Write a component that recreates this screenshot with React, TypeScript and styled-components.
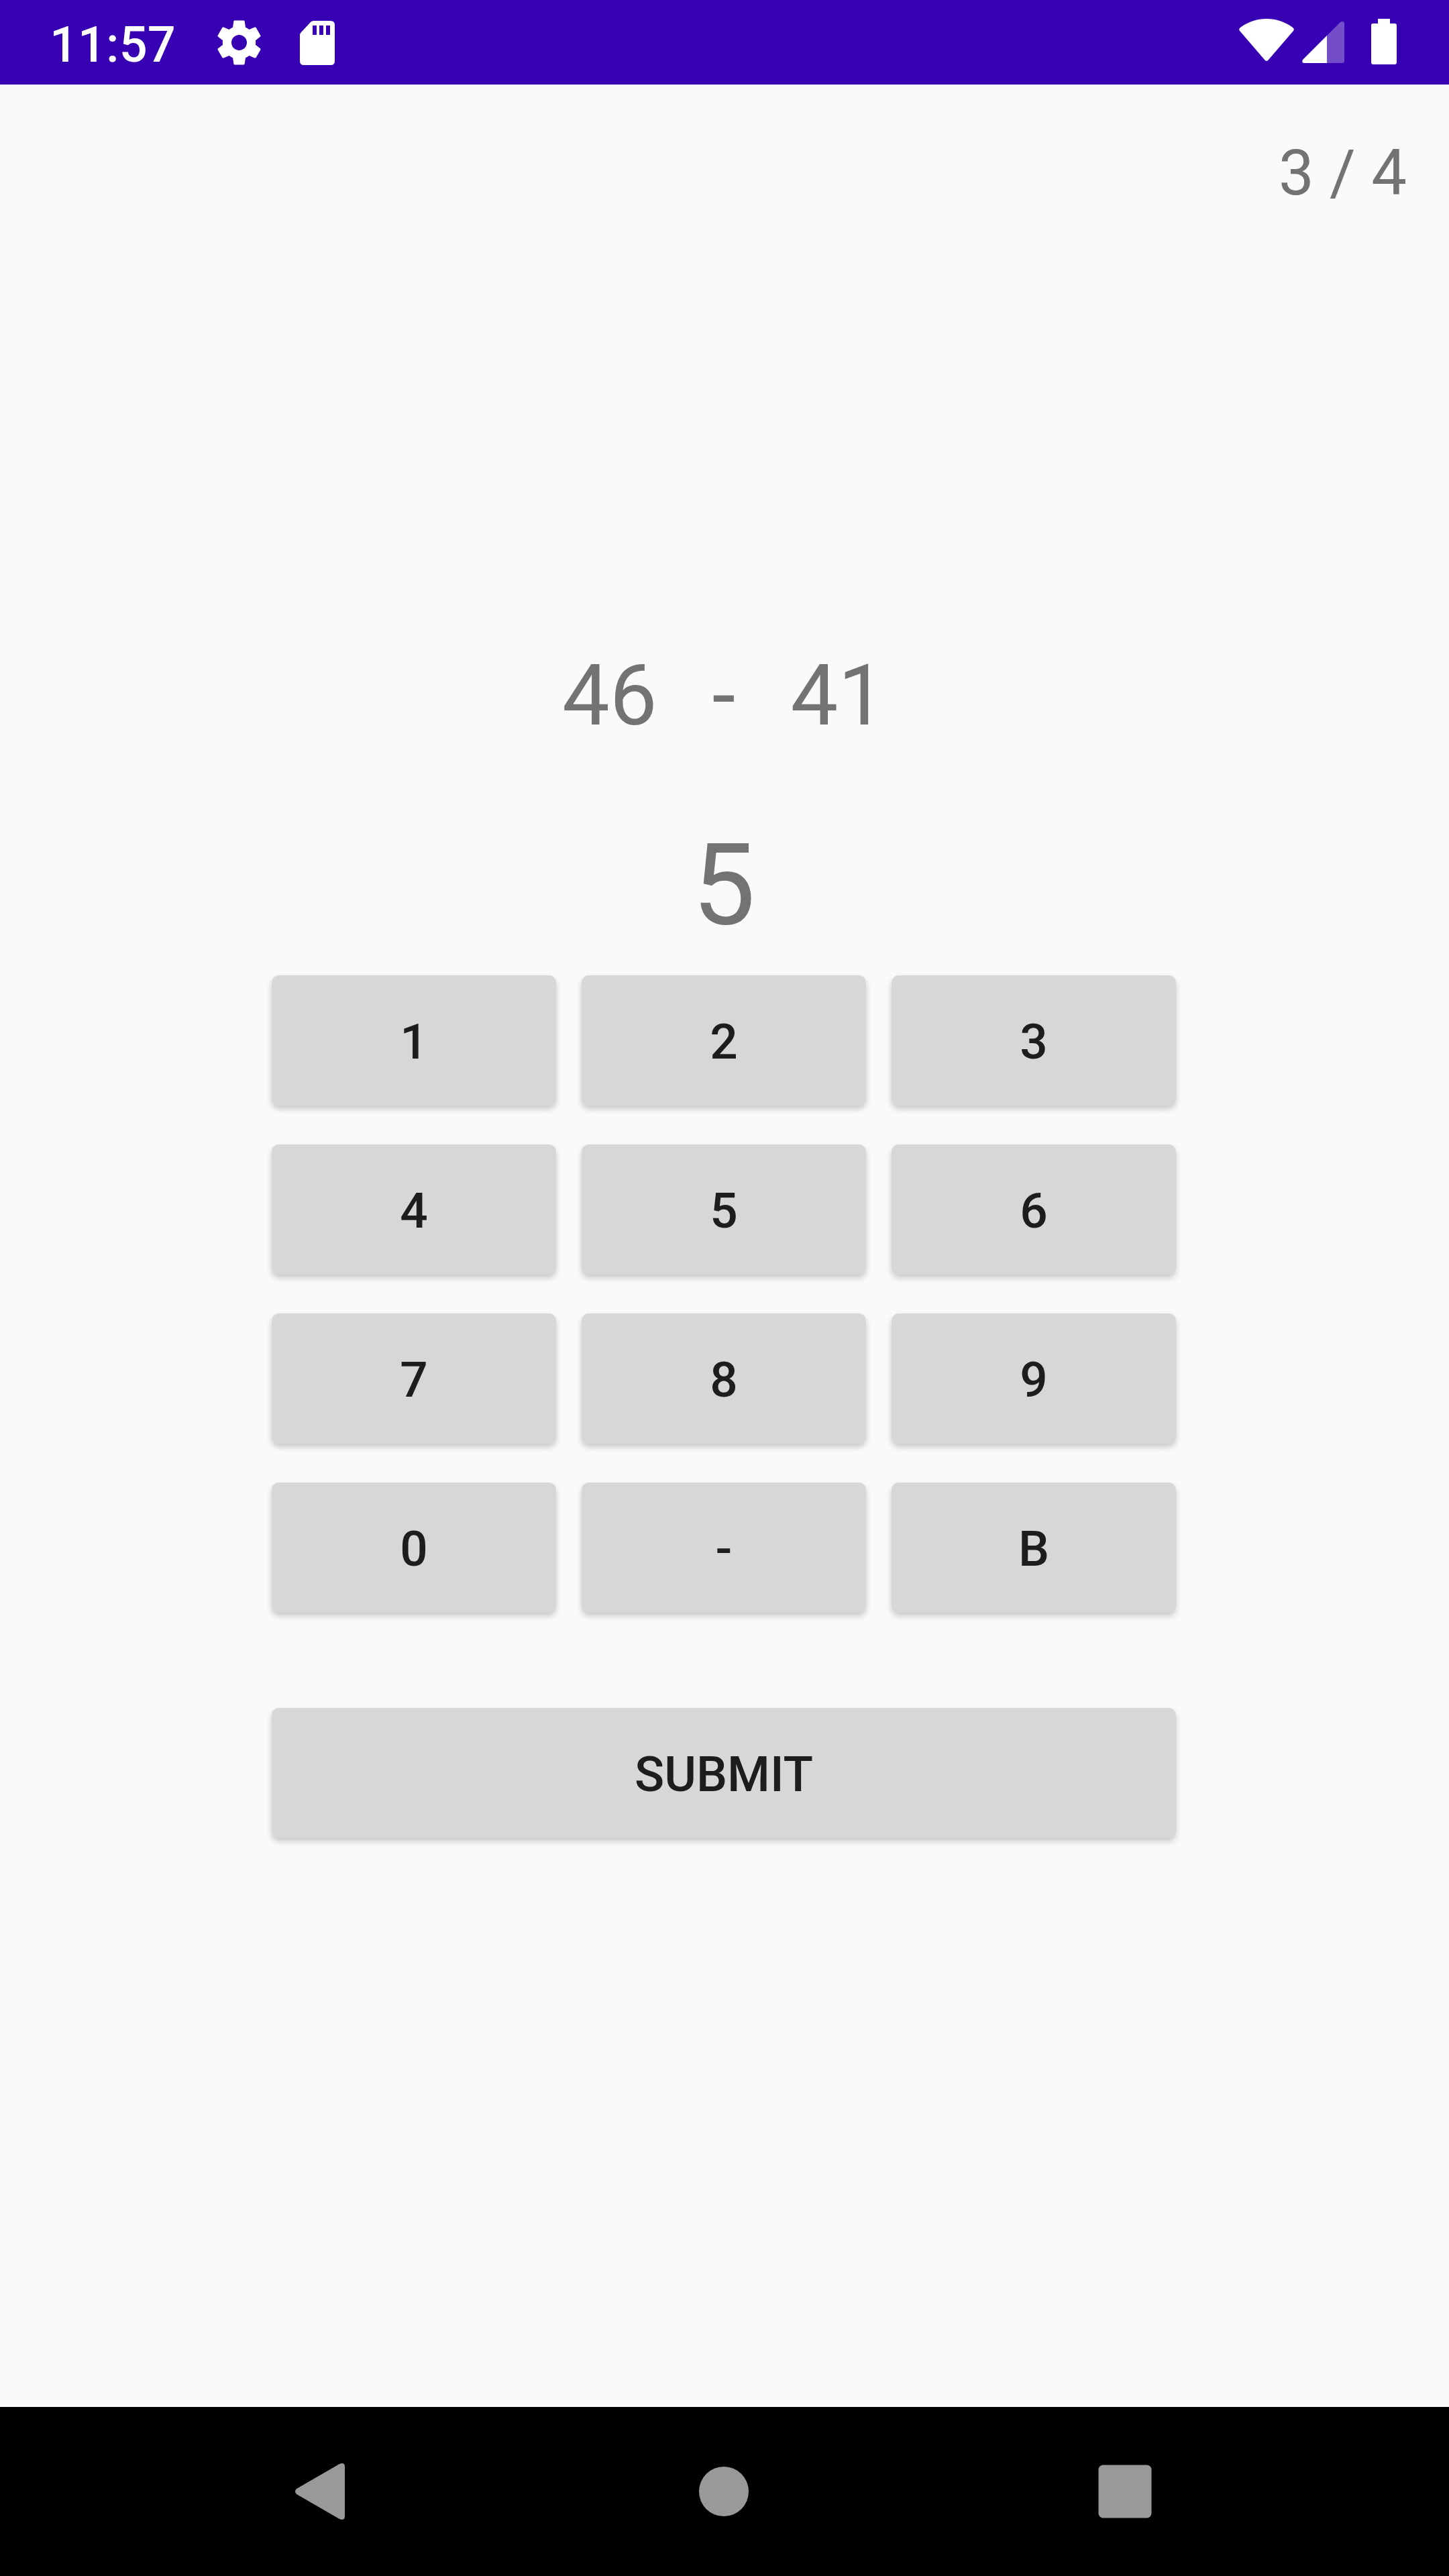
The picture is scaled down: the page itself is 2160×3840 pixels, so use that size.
import React, { useState } from "react";
import styled, { createGlobalStyle } from "styled-components";

const GlobalStyle = createGlobalStyle`
  *, *::before, *::after { box-sizing: border-box; }
  html, body, #root { height: 100%; }
  body {
    margin: 0;
    background: #fafafa;
    font-family: Roboto, "Liberation Sans", sans-serif;
  }
  button { font-family: inherit; cursor: pointer; }
  svg { display: block; }
`;

const Screen = styled.div`
  display: flex;
  flex-direction: column;
  min-height: 100vh;
`;

const StatusBar = styled.header`
  display: flex;
  align-items: center;
  justify-content: space-between;
  height: 126px;
  padding: 0 78px 0 74px;
  background: #3700b3;
  color: #ffffff;
`;

const StatusGroup = styled.div<{ $gap: number }>`
  display: flex;
  align-items: center;
  gap: ${({ $gap }) => $gap}px;
`;

const Clock = styled.time`
  margin-right: 18px;
  padding-top: 8px;
  font-size: 74px;
  font-weight: 500;
  line-height: 118px;
`;

const Quiz = styled.main`
  display: flex;
  flex: 1;
  flex-direction: column;
  align-items: center;
  padding: 76px 63px 76px 61px;
  color: #737373;
`;

const Progress = styled.p`
  align-self: flex-end;
  margin: 0;
  font-size: 94px;
  line-height: 112px;
`;

const Question = styled.div`
  display: flex;
  gap: 82px;
  margin-top: 649px;
  font-size: 126px;
  line-height: 148px;
`;

const Answer = styled.output`
  margin-top: 111px;
  font-size: 168px;
  line-height: 196px;
`;

const Keypad = styled.div`
  display: grid;
  grid-template-columns: repeat(3, 1fr);
  gap: 58px 38px;
  width: 100%;
  max-width: 1348px;
  margin-top: 36px;
`;

const Key = styled.button<{ $wide?: boolean }>`
  ${({ $wide }) => $wide && "grid-column: 1 / -1; margin-top: 84px;"}
  height: 194px;
  padding: 4px 0 0;
  border: 0;
  border-radius: 11px;
  background: #d6d8d7;
  box-shadow: 0 5px 10px rgba(0, 0, 0, 0.2);
  color: #1d1d1d;
  font-size: 73px;
  font-weight: 500;
  line-height: 86px;
`;

const NavBar = styled.nav`
  display: flex;
  align-items: center;
  justify-content: center;
  gap: 346px;
  height: 252px;
  padding-right: 2px;
  background: #000000;
`;

const NavButton = styled.button`
  display: grid;
  place-items: center;
  width: 252px;
  height: 252px;
  padding: 0;
  border: 0;
  background: transparent;
  color: #999999;
`;

const GearIcon = () => (
  <svg width="79" height="79" viewBox="0 0 24 24" fill="currentColor" aria-hidden="true">
    <path d="M19.43 12.98c.04-.32.07-.64.07-.98s-.03-.66-.07-.98l2.11-1.65c.19-.15.24-.42.12-.64l-2-3.46c-.12-.22-.39-.3-.61-.22l-2.49 1c-.52-.4-1.08-.73-1.69-.98l-.38-2.65C14.46 2.18 14.25 2 14 2h-4c-.25 0-.46.18-.49.42l-.38 2.65c-.61.25-1.17.59-1.69.98l-2.49-1c-.23-.09-.49 0-.61.22l-2 3.46c-.13.22-.07.49.12.64l2.11 1.65c-.04.32-.07.65-.07.98s.03.66.07.98l-2.11 1.65c-.19.15-.24.42-.12.64l2 3.46c.12.22.39.3.61.22l2.49-1c.52.4 1.08.73 1.69.98l.38 2.65c.03.24.24.42.49.42h4c.25 0 .46-.18.49-.42l.38-2.65c.61-.25 1.17-.59 1.69-.98l2.49 1c.23.09.49 0 .61-.22l2-3.46c.12-.22.07-.49-.12-.64l-2.11-1.65zM12 15.500c-1.930 0-3.500-1.570-3.500-3.500s1.570-3.500 3.500-3.500 3.500 1.570 3.500 3.500-1.570 3.500-3.500 3.500z" />
  </svg>
);

const SdCardIcon = () => (
  <svg width="79" height="79" viewBox="0 0 79 79" fill="currentColor" aria-hidden="true">
    <path
      fillRule="evenodd"
      d="M35 7H59Q66 7 66 13V67Q66 73 60 73H20Q14 73 14 67V28Q14 26 16 24L30 9Q32 7 35 7ZM33 14V28H39V14ZM43 14V28H49V14ZM53 14V28H59V14Z"
    />
  </svg>
);

const WifiIcon = () => (
  <svg width="82" height="70" viewBox="0 0 82 70" fill="currentColor" aria-hidden="true">
    <path d="M2 13C14 4 27 0 41 0S68 4 80 13Q83 15 81 18L44 61Q41 65 38 61L1 18Q-1 15 2 13Z" />
  </svg>
);

const SignalIcon = () => (
  <svg width="63" height="70" viewBox="0 -4 63 70" fill="currentColor" aria-hidden="true">
    <path d="M37 21V62H3Q-1 62 1 57Z" />
    <path opacity="0.3" d="M37 21L57 1Q63-2 63 4V59Q63 62 60 62H37Z" />
  </svg>
);

const BatteryIcon = () => (
  <svg width="38" height="70" viewBox="0 0 38 70" fill="currentColor" aria-hidden="true">
    <path d="M10 0H28V7H35Q38 7 38 10V65Q38 68 35 68H3Q0 68 0 65V10Q0 7 3 7H10Z" />
  </svg>
);

const BackIcon = () => (
  <svg width="82" height="84" viewBox="0 0 82 84" fill="currentColor" aria-hidden="true">
    <path d="M2 38L66 1Q74-2 74 5V79Q74 86 66 83L2 46Q-2 42 2 38Z" />
  </svg>
);

const HomeIcon = () => (
  <svg width="74" height="74" viewBox="0 0 74 74" fill="currentColor" aria-hidden="true">
    <circle cx="37" cy="37" r="37" />
  </svg>
);

const RecentsIcon = () => (
  <svg width="80" height="80" viewBox="0 0 80 80" fill="currentColor" aria-hidden="true">
    <rect x="0.500" y="0.500" width="79" height="79" rx="7" />
  </svg>
);

const KEYS = ["1", "2", "3", "4", "5", "6", "7", "8", "9", "0", "-", "B"];

export default function App() {
  const [answer, setAnswer] = useState("5");

  const press = (key: string) =>
    setAnswer((value) => (key === "B" ? value.slice(0, -1) : value + key));

  return (
    <Screen>
      <GlobalStyle />
      <StatusBar>
        <StatusGroup $gap={37}>
          <Clock>11:57</Clock>
          <GearIcon />
          <SdCardIcon />
        </StatusGroup>
        <StatusGroup $gap={40}>
          <StatusGroup $gap={12}>
            <WifiIcon />
            <SignalIcon />
          </StatusGroup>
          <BatteryIcon />
        </StatusGroup>
      </StatusBar>
      <Quiz>
        <Progress>3 / 4</Progress>
        <Question>
          <span>46</span>
          <span>-</span>
          <span>41</span>
        </Question>
        <Answer>{answer}</Answer>
        <Keypad>
          {KEYS.map((key) => (
            <Key key={key} type="button" onClick={() => press(key)}>
              {key}
            </Key>
          ))}
          <Key type="button" $wide>
            SUBMIT
          </Key>
        </Keypad>
      </Quiz>
      <NavBar>
        <NavButton type="button" aria-label="Back">
          <BackIcon />
        </NavButton>
        <NavButton type="button" aria-label="Home">
          <HomeIcon />
        </NavButton>
        <NavButton type="button" aria-label="Recent apps">
          <RecentsIcon />
        </NavButton>
      </NavBar>
    </Screen>
  );
}
